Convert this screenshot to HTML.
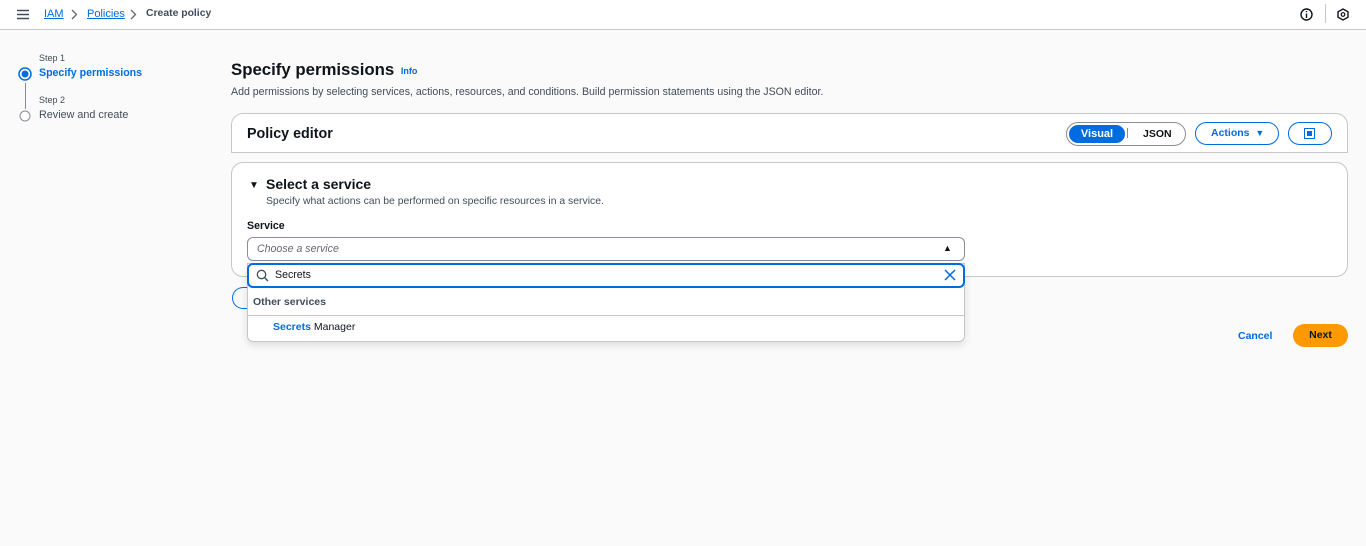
<!DOCTYPE html>
<html><head><style>
*{box-sizing:border-box;margin:0;padding:0}
body{width:1366px;height:546px;background:#fafafa;font-family:"Liberation Sans",Arial,sans-serif;color:#0f141a;position:relative;overflow:hidden;font-size:12px}
.a{position:absolute;white-space:nowrap}
.hdr{left:0;top:0;width:1366px;height:30px;background:#fff;border-bottom:1px solid #c6c6cd}
.link{color:#006ce0;text-decoration:underline}
.card{background:#fff;border:1px solid #c6c6cd}
</style></head><body>
<div class="a hdr"></div>
<svg class="a" style="left:17px;top:9px" width="12" height="11"><path d="M0 1.5H12M0 5.5H12M0 9.5H12" stroke="#414d5c" stroke-width="1.6"/></svg>
<div class="a link" style="left:44px;top:8px;font-size:11px">IAM</div>
<svg class="a" style="left:70px;top:9px" width="8" height="11"><path d="M2 1L6.5 5.5L2 10" fill="none" stroke="#656871" stroke-width="1.3"/></svg>
<div class="a link" style="left:87px;top:8px;font-size:11px">Policies</div>
<svg class="a" style="left:129px;top:9px" width="8" height="11"><path d="M2 1L6.5 5.5L2 10" fill="none" stroke="#656871" stroke-width="1.3"/></svg>
<div class="a" style="left:146px;top:8px;font-weight:bold;color:#414d5c;font-size:10.4px">Create policy</div>
<svg class="a" style="left:1300px;top:8px" width="13" height="13"><circle cx="6.5" cy="6.5" r="5.5" fill="none" stroke="#0f141a" stroke-width="1.4"/><path d="M6.5 5.5V10M6.5 3V4.3" stroke="#0f141a" stroke-width="1.4"/></svg>
<div class="a" style="left:1325px;top:4px;width:1px;height:19px;background:#c6c6cd"></div>
<svg class="a" style="left:1337px;top:8px" width="12" height="13"><path d="M6 1L11 3.8V9.2L6 12L1 9.2V3.8Z" fill="none" stroke="#0f141a" stroke-width="1.4"/><circle cx="6" cy="6.5" r="1.8" fill="none" stroke="#0f141a" stroke-width="1.2"/></svg>

<div class="a" style="left:39px;top:53px;font-size:9px;color:#414d5c">Step 1</div>
<svg class="a" style="left:18px;top:67px" width="14" height="14"><circle cx="7" cy="7" r="6" fill="none" stroke="#006ce0" stroke-width="1.5"/><circle cx="7" cy="7" r="3.5" fill="#006ce0"/></svg>
<div class="a" style="left:39px;top:67px;font-weight:bold;color:#006ce0;font-size:10.6px">Specify permissions</div>
<div class="a" style="left:25px;top:83px;width:1px;height:26px;background:#8c8c94"></div>
<div class="a" style="left:39px;top:95px;font-size:9px;color:#414d5c">Step 2</div>
<svg class="a" style="left:19px;top:110px" width="12" height="12"><circle cx="6" cy="6" r="5" fill="#fff" stroke="#8c8c94" stroke-width="1"/></svg>
<div class="a" style="left:39px;top:109px;font-size:10.8px;color:#414d5c">Review and create</div>

<div class="a" style="left:231px;top:60px;font-size:16.8px;font-weight:bold">Specify permissions <span style="font-size:9px;color:#006ce0;margin-left:2px;vertical-align:1px">Info</span></div>
<div class="a" style="left:231px;top:86px;font-size:10.6px;color:#414d5c">Add permissions by selecting services, actions, resources, and conditions. Build permission statements using the JSON editor.</div>

<div class="a card" style="left:231px;top:113px;width:1117px;height:40px;border-radius:12px 12px 0 0"></div>
<div class="a" style="left:247px;top:126px;font-size:14.3px;font-weight:bold">Policy editor</div>
<div class="a" style="left:1066px;top:122px;width:120px;height:24px;border:1px solid #8c8c94;border-radius:12px;background:#fff"></div>
<div class="a" style="left:1069px;top:125px;width:56px;height:18px;border-radius:9px;background:#006ce0;color:#fff;font-weight:bold;font-size:11px;text-align:center;line-height:18px">Visual</div>
<div class="a" style="left:1127px;top:128px;width:1px;height:10px;background:#8c8c94"></div>
<div class="a" style="left:1143px;top:128px;font-weight:bold;font-size:10.5px">JSON</div>
<div class="a" style="left:1195px;top:122px;width:84px;height:23px;border:1px solid #006ce0;border-radius:12px;background:#fff;color:#006ce0;font-weight:bold;font-size:10.5px;line-height:21px;padding-left:15px">Actions <span style="font-size:9px;margin-left:3px">&#9660;</span></div>
<div class="a" style="left:1288px;top:122px;width:44px;height:23px;border:1px solid #006ce0;border-radius:12px;background:#fff"></div>
<div class="a" style="left:1304px;top:128px;width:11px;height:11px;border:1.5px solid #006ce0"><div style="margin:1.5px;width:5px;height:5px;background:#006ce0"></div></div>

<div class="a card" style="left:231px;top:162px;width:1117px;height:115px;border-radius:12px"></div>
<div class="a" style="left:249px;top:180px;font-size:10px">&#9660;</div>
<div class="a" style="left:266px;top:176px;font-size:14px;font-weight:bold">Select a service</div>
<div class="a" style="left:266px;top:196px;font-size:10.4px;color:#414d5c">Specify what actions can be performed on specific resources in a service.</div>
<div class="a" style="left:247px;top:220px;font-size:10.6px;font-weight:bold">Service</div>
<div class="a" style="left:247px;top:237px;width:718px;height:24px;border:1px solid #8c8c94;border-radius:6px;background:#fff;padding:5px 9px;font-style:italic;color:#656871;font-size:10.6px">Choose a service</div>
<div class="a" style="left:943px;top:243px;font-size:9px;color:#0f141a">&#9650;</div>

<div class="a" style="left:232px;top:287px;width:20px;height:22px;border:1px solid #006ce0;border-radius:11px 0 0 11px;border-right:none"></div>

<div class="a" style="left:247px;top:263px;width:718px;height:79px;background:#fff;border:1px solid #c6c6cd;border-radius:0 0 6px 6px;box-shadow:0 3px 8px rgba(0,0,0,.12)"></div>
<div class="a" style="left:247px;top:263px;width:718px;height:25px;border:2px solid #006ce0;border-radius:6px;background:#fff"></div>
<svg class="a" style="left:256px;top:269px" width="13" height="13"><circle cx="5.5" cy="5.5" r="4.2" fill="none" stroke="#414d5c" stroke-width="1.3"/><path d="M8.5 8.5L12 12" stroke="#414d5c" stroke-width="1.4"/></svg>
<div class="a" style="left:275px;top:269px;font-size:10.6px">Secrets</div>
<svg class="a" style="left:944px;top:269px" width="12" height="12"><path d="M1 1L11 11M11 1L1 11" stroke="#006ce0" stroke-width="1.5"/></svg>
<div class="a" style="left:253px;top:296px;font-size:10.5px;font-weight:bold;color:#414d5c">Other services</div>
<div class="a" style="left:248px;top:315px;width:716px;height:1px;background:#c6c6cd"></div>
<div class="a" style="left:273px;top:321px;font-size:10.5px"><b style="color:#006ce0">Secrets</b> Manager</div>

<div class="a" style="left:1238px;top:330px;font-size:10.5px;font-weight:bold;color:#006ce0">Cancel</div>
<div class="a" style="left:1293px;top:324px;width:55px;height:23px;border-radius:12px;background:#ff9900;font-size:10.5px;font-weight:bold;text-align:center;line-height:23px">Next</div>
</body></html>
